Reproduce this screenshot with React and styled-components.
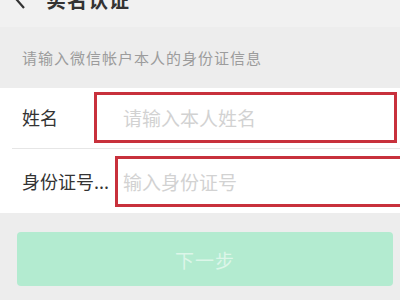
import React from "react";
import styled, { createGlobalStyle } from "styled-components";

const Global = createGlobalStyle`
  html, body { margin: 0; padding: 0; background: #ededed; }
  body { font-family: "Noto Sans CJK SC", "Noto Sans", sans-serif; }
  * { box-sizing: border-box; }
`;

const Page = styled.div`
  width: 400px;
  height: 300px;
  overflow: hidden;
  background: #ededed;
  display: flex;
  flex-direction: column;
`;

const Header = styled.div`
  height: 27px;
  flex: none;
  background: #f1f1f1;
  display: flex;
  align-items: flex-start;
  overflow: hidden;
  padding-left: 14px;
`;

const Back = styled.svg`
  width: 14px;
  height: 20px;
  margin-top: -10px;
  flex: none;
`;

const Title = styled.div`
  margin-top: -11px;
  margin-left: 18px;
  font-size: 20px;
  line-height: 22px;
  font-weight: 700;
  color: #333;
  letter-spacing: 1px;
`;

const Hint = styled.div`
  height: 61px;
  flex: none;
  padding-left: 22px;
  display: flex;
  align-items: center;
  font-size: 15px;
  letter-spacing: 1px;
  color: #9c9c9c;
`;

const Section = styled.div`
  background: #fff;
  flex: none;
  display: flex;
  flex-direction: column;
`;

const Row = styled.div`
  height: ${(p) => p.$h}px;
  display: flex;
  align-items: flex-start;
  padding-top: ${(p) => p.$top}px;
  overflow: hidden;
  position: relative;
`;

const Label = styled.div`
  width: ${(p) => p.$w}px;
  flex: none;
  padding-left: 22px;
  height: 50px;
  display: flex;
  align-items: center;
  font-size: 18px;
  color: #333;
  white-space: nowrap;
`;

const Field = styled.div`
  flex: none;
  width: ${(p) => p.$w}px;
  height: 51px;
  border: 3px solid #c8313c;
  display: flex;
  align-items: center;
  padding-left: ${(p) => p.$pad}px;
  font-size: 19px;
  color: #d2d2d2;
  white-space: nowrap;
`;

const Divider = styled.div`
  height: 1px;
  margin-left: 12px;
  background: #e6e6e6;
`;

const ButtonWrap = styled.div`
  padding: 19px 7px 0 17px;
`;

const Button = styled.div`
  height: 54px;
  border-radius: 4px;
  background: #b3ebd0;
  color: #dcf6e9;
  font-size: 19px;
  display: flex;
  align-items: center;
  justify-content: center;
  letter-spacing: 1px;
`;

export default function App() {
  return (
    <Page>
      <Global />
      <Header>
        <Back viewBox="0 0 14 20">
          <path d="M10 2 L3 10 L10 18" fill="none" stroke="#333" strokeWidth="2.2" />
        </Back>
        <Title>实名认证</Title>
      </Header>
      <Hint>请输入微信帐户本人的身份证信息</Hint>
      <Section>
        <Row $h={60} $top={4}>
          <Label $w={94}>姓名</Label>
          <Field $w={303} $pad={26}>请输入本人姓名</Field>
        </Row>
        <Divider />
        <Row $h={64} $top={7}>
          <Label $w={115}>身份证号...</Label>
          <Field $w={300} $pad={5}>输入身份证号</Field>
        </Row>
      </Section>
      <ButtonWrap>
        <Button>下一步</Button>
      </ButtonWrap>
    </Page>
  );
}
